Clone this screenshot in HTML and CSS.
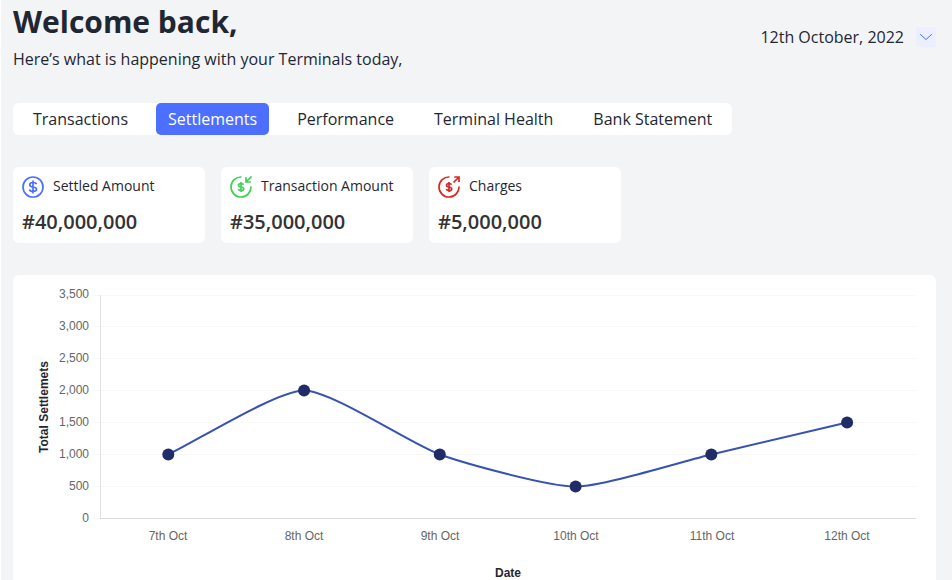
FILE: index.html
```html
<!DOCTYPE html>
<html lang="en">
<head>
<meta charset="utf-8">
<meta name="viewport" content="width=device-width, initial-scale=1">
<title>Settlements</title>
<link rel="stylesheet" href="styles.css">
</head>
<body>
<main class="page">
  <header class="header">
    <div>
      <h1 class="title">Welcome back,</h1>
      <p class="subtitle">Here’s what is happening with your Terminals today,</p>
    </div>
    <button class="date" type="button">
      <span>12th October, 2022</span>
      <span class="chevron"><svg width="20" height="20" viewBox="0 0 20 20" fill="none" stroke="#4c6fff" stroke-linecap="round" stroke-linejoin="round" aria-hidden="true"><path d="M4.500 7.500 10 12.500 15.500 7.500"/></svg></span>
    </button>
  </header>

  <nav class="tabs" aria-label="Reports">
    <button class="tab" type="button">Transactions</button>
    <button class="tab tab-active" type="button" aria-current="page">Settlements</button>
    <button class="tab" type="button">Performance</button>
    <button class="tab" type="button">Terminal Health</button>
    <button class="tab" type="button">Bank Statement</button>
  </nav>

  <section class="cards" aria-label="Totals">
    <article class="card">
      <div class="card-head">
        <svg class="icon icon-blue" viewBox="0 0 22 22" aria-hidden="true">
          <circle cx="11" cy="11" r="10"/>
          <path d="M14.500 8.300C14.100 7 12.900 6.500 11 6.500 9 6.500 7.700 7.300 7.700 8.700c0 1.500 1.400 2 3.300 2.300s3.500.700 3.500 2.300c0 1.500-1.400 2.200-3.500 2.200-1.900 0-3.200-.700-3.500-2M11 4.500v13"/>
        </svg>
        <h2 class="card-label">Settled Amount</h2>
      </div>
      <p class="card-value">#40,000,000</p>
    </article>
    <article class="card">
      <div class="card-head">
        <svg class="icon icon-green" viewBox="0 0 22 22" aria-hidden="true">
          <path d="M11.500 1A10 10 0 1 0 21 10.500"/>
          <path d="M21.500.500 16 6M16 1.300V6h4.900"/>
          <path d="M13.500 8.800C13.300 7.900 12.400 7.500 11 7.500 9.500 7.500 8.500 8 8.500 9.200s1 1.500 2.500 1.800 2.700.600 2.700 1.900-1.100 1.700-2.700 1.700c-1.400 0-2.400-.500-2.700-1.500M11 6v10"/>
        </svg>
        <h2 class="card-label">Transaction Amount</h2>
      </div>
      <p class="card-value">#35,000,000</p>
    </article>
    <article class="card">
      <div class="card-head">
        <svg class="icon icon-red" viewBox="0 0 22 22" aria-hidden="true">
          <path d="M11.500 1A10 10 0 1 0 21 10.500"/>
          <path d="M15.500 6.500 21 1M16.300 1H21v4.900"/>
          <path d="M13.500 8.800C13.300 7.900 12.400 7.500 11 7.500 9.500 7.500 8.500 8 8.500 9.200s1 1.500 2.500 1.800 2.700.600 2.700 1.900-1.100 1.700-2.700 1.700c-1.400 0-2.400-.500-2.700-1.500M11 6v10"/>
        </svg>
        <h2 class="card-label">Charges</h2>
      </div>
      <p class="card-value">#5,000,000</p>
    </article>
  </section>

  <section class="chart-card">
    <svg class="chart" viewBox="0 0 923 305" role="img" aria-label="Total settlements by date">
      <path class="grid" d="M79 20.500H902M79 51.500H902M79 83.500H902M79 115.500H902M79 147.500H902M79 179.500H902M79 211.500H902M79 243.500H88"/>
      <path class="axis" d="M87.500 20V243"/>
      <path class="axis axis-x" d="M87 243.500H903"/>
      <g class="ticks ticks-y">
        <text x="76" y="23">3,500</text>
        <text x="76" y="55">3,000</text>
        <text x="76" y="87">2,500</text>
        <text x="76" y="119">2,000</text>
        <text x="76" y="151">1,500</text>
        <text x="76" y="183">1,000</text>
        <text x="76" y="215">500</text>
        <text x="76" y="247">0</text>
      </g>
      <g class="ticks ticks-x">
        <text x="155" y="265">7th Oct</text>
        <text x="291" y="265">8th Oct</text>
        <text x="427" y="265">9th Oct</text>
        <text x="563" y="265">10th Oct</text>
        <text x="699" y="265">11th Oct</text>
        <text x="834" y="265">12th Oct</text>
      </g>
      <path class="line" d="M155.300 179.500C182.400 166.700 263.900 115.500 291.100 115.500 318.200 115.500 398.700 169.500 426.800 179.500 453 188.800 535.400 211.500 562.600 211.500 589.700 211.500 671.100 185.900 698.300 179.500L834.100 147.500"/>
      <g class="points">
        <circle cx="155.300" cy="179.500" r="6"/>
        <circle cx="291.100" cy="115.500" r="6"/>
        <circle cx="426.800" cy="179.500" r="6"/>
        <circle cx="562.600" cy="211.500" r="6"/>
        <circle cx="698.300" cy="179.500" r="6"/>
        <circle cx="834.100" cy="147.500" r="6"/>
      </g>
      <text class="axis-title" transform="translate(35 132) rotate(-90)">Total Settlemets</text>
      <text class="axis-title" x="495" y="302">Date</text>
    </svg>
  </section>
</main>
</body>
</html>
```
FILE: styles.css
```css
* {
  box-sizing: border-box;
}

body {
  margin: 0;
  background: #fff;
  color: #1f2733;
  font-family: "Open Sans", "Noto Sans", sans-serif;
  font-size: 16px;
  line-height: 24px;
}

h1,
h2,
p {
  margin: 0;
}

button {
  border: 0;
  background: none;
  color: inherit;
  font: inherit;
  cursor: pointer;
}

.page {
  margin-left: 1px;
  padding: 3px 16px 0 12px;
  background: #f3f4f6;
}

.header {
  display: flex;
  align-items: center;
  justify-content: space-between;
  margin-bottom: 32px;
}

.title {
  margin-bottom: 6px;
  font-size: 30px;
  font-weight: 700;
  line-height: 38px;
}

.date {
  display: flex;
  align-items: center;
  gap: 12px;
  padding: 0;
}

.chevron {
  display: block;
  height: 20px;
  background: #ebefff;
}

.chevron svg {
  display: block;
}

.tabs {
  display: flex;
  gap: 16px;
  width: fit-content;
  margin-bottom: 32px;
  padding: 0 8px;
  border-radius: 6px;
  background: #fff;
}

.tab {
  height: 32px;
  padding: 0 12px;
  border-radius: 5px;
}

.tab-active {
  background: #4c6fff;
  color: #fff;
}

.cards {
  display: flex;
  gap: 16px;
  margin-bottom: 32px;
}

.card {
  width: 192px;
  padding: 9px 9px 7px;
  border-radius: 6px;
  background: #fff;
}

.card-head {
  display: flex;
  align-items: flex-start;
  gap: 9px;
  margin-bottom: 10px;
}

.card-label {
  font-size: 14px;
  font-weight: 400;
  line-height: 20px;
}

.card-value {
  color: #333;
  font-size: 20px;
  font-weight: 600;
  line-height: 28px;
}

.icon {
  width: 22px;
  height: 22px;
  fill: none;
  stroke-width: 1.700;
}

.icon-blue {
  stroke: #4c6fff;
}

.icon-green {
  stroke: #3fd153;
}

.icon-red {
  stroke: #dc2626;
}

.chart-card {
  border-radius: 6px 6px 0 0;
  background: #fff;
}

.chart {
  display: block;
  width: 100%;
  height: auto;
  font-family: "Liberation Sans", Arial, sans-serif;
  font-size: 12px;
}

.grid {
  fill: none;
  stroke: #f7f7f7;
}

.axis {
  stroke: #e2e2e2;
}

.axis-x {
  stroke: #dadada;
}

.ticks {
  fill: #666;
}

.ticks-y {
  text-anchor: end;
}

.ticks-x,
.axis-title {
  text-anchor: middle;
}

.axis-title {
  fill: #1f2733;
  font-weight: 700;
}

.line {
  fill: none;
  stroke: #3751b5;
  stroke-width: 2;
}

.points {
  fill: #1f2c68;
}
```
